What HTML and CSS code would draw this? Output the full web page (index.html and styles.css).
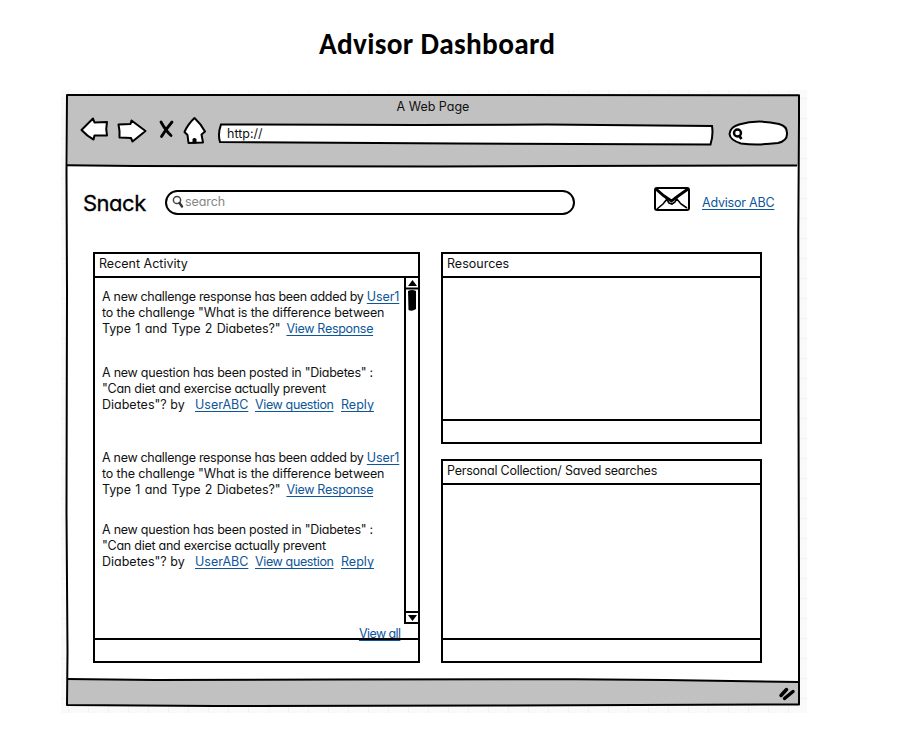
FILE: index.html
```html
<!DOCTYPE html>
<html lang="en">
<head>
<meta charset="utf-8">
<title>Advisor Dashboard</title>
<link rel="stylesheet" href="styles.css">
</head>
<body>
<h1 class="title">Advisor Dashboard</h1>
<div class="sheet">
  <div class="window">
    <svg class="outline" width="736" height="615" viewBox="0 0 736 615" aria-hidden="true">
      <path class="chrome" d="M3 3.500L733 3V74H470L150 74.500 3 73.800Z"/>
      <path class="chrome" d="M3 587.500L120 588 330 587 560 587.300 733 590V613L390 613.500 180 613 3 613.500Z"/>
      <path class="ink" d="M2 3L300 3 734 3.200 734 28 733.300 140 733.500 320 734 500 734 612.500 430 613.500 150 614 2 613 2.500 560 1.500 420 2 200 1.500 80Z"/>
      <path class="ink" d="M2 73.200L70 74 370 74.500 500 74 732 73.500M2 587L90 588 270 587.500 510 587.200 600 588 733 590"/>
    </svg>
    <header class="toolbar">
      <div class="caption">A Web Page</div>
      <div class="controls">
        <svg class="nav" width="130" height="34" viewBox="0 0 130 34" aria-hidden="true">
          <g fill="#fff" stroke="#000" stroke-width="2" stroke-linejoin="round">
            <path d="M2.500 16L14 4.500 15.500 8.500 28 8Q26.500 15 28 21.500L15.500 21.500 14.500 25.500Q8 22 2.500 16Z"/>
            <path d="M39.500 10.500L51.500 10 52.500 6.500 66.500 17 53.500 27.500 52 24 40.500 23.500Q41 17 39.500 10.500Z"/>
            <path d="M115.500 4Q122 10 126 17.500L122.500 20.500 124 28.500 109.500 29 108.500 21 105.500 18Q109 10 115.500 4Z"/>
          </g>
          <path d="M113.500 29.500V25Q115.500 23 117.500 25V29.500Z"/>
          <path d="M82 8Q87 17 92 21.500M93 8Q87 15 82.500 22.500" fill="none" stroke="#000" stroke-width="2.800" stroke-linecap="round"/>
        </svg>
        <div class="address">
          <svg width="498" height="24" viewBox="0 0 498 24" aria-hidden="true"><path d="M4 2.500L200 3 330 2.500 495 4Q496.500 13 493.500 22.500L240 21.500 3 20Q.500 12 4 2.500Z" fill="#fff" stroke="#000" stroke-width="2"/></svg>
          <span class="url">http://</span>
        </div>
        <svg class="find" width="62" height="28" viewBox="0 0 62 28" aria-hidden="true">
          <path d="M11 6.500Q30 1 51 6 59.500 8 59 16 59 23 50 25 30 27.500 13 25.500 2 22 1.500 16 2 9 11 6.500Z" fill="#fff" stroke="#000" stroke-width="2"/>
          <circle cx="9.500" cy="15" r="3.500" fill="none" stroke="#000" stroke-width="2.400"/><path d="M11 17.500L13.500 21" stroke="#000" stroke-width="2.800"/>
        </svg>
      </div>
    </header>
    <div class="appbar">
      <span class="brand">Snack</span>
      <div class="search">
        <svg width="13" height="14" viewBox="0 0 13 14" aria-hidden="true"><circle cx="5" cy="5" r="3.600" fill="#fff" stroke="#444" stroke-width="1.500"/><path d="M7.500 8L10 11.500" stroke="#333" stroke-width="2.400" stroke-linecap="round"/></svg>
        <span class="placeholder">search</span>
      </div>
      <svg class="mail" width="38" height="26" viewBox="0 0 38 26" aria-hidden="true">
        <rect x="2" y="2" width="34" height="22" rx="2" fill="#fff" stroke="#000" stroke-width="2"/>
        <path d="M3 3Q10 10 18.500 15 25 10 35 3" fill="none" stroke="#000" stroke-width="2.800"/>
        <path d="M4 23L10 18 14 13M34 22L28 18 23 12M13 12L16 17 19 18 22 16 24 12" fill="none" stroke="#000" stroke-width="1.600"/>
      </svg>
      <a class="user link">Advisor ABC</a>
    </div>
    <main class="board">
      <section class="panel activity">
        <h2 class="head">Recent Activity</h2>
        <div class="body">
          <div class="feed">
            <p class="item first"><span class="l1">A new challenge response has been added by <a class="link">User1</a></span><span class="l2">to the challenge "What is the difference between</span><span class="l3">Type 1 and Type 2 Diabetes?"<a class="link gap">View Response</a></span></p>
            <p class="item second"><span class="l4">A new question has been posted in "Diabetes" :</span><span class="l5">"Can diet and exercise actually prevent</span><span class="l6"><span class="by">Diabetes"? by</span><span class="ua"><a class="link">UserABC</a></span><span class="vq"><a class="link">View question</a></span><a class="link">Reply</a></span></p>
            <p class="item third"><span class="l1">A new challenge response has been added by <a class="link">User1</a></span><span class="l2">to the challenge "What is the difference between</span><span class="l3">Type 1 and Type 2 Diabetes?"<a class="link gap">View Response</a></span></p>
            <p class="item fourth"><span class="l4">A new question has been posted in "Diabetes" :</span><span class="l5">"Can diet and exercise actually prevent</span><span class="l6"><span class="by">Diabetes"? by</span><span class="ua"><a class="link">UserABC</a></span><span class="vq"><a class="link">View question</a></span><a class="link">Reply</a></span></p>
            <a class="all link">View all</a>
          </div>
          <svg class="scroll" width="15" height="346" viewBox="0 0 15 346" aria-hidden="true">
            <path d="M1 0V345H15M1 10.500H15M1 334H15" fill="none" stroke="#000" stroke-width="2"/>
            <path d="M8.500 2L13 8H4ZM4 337H13L8.500 343Z"/>
            <path d="M4 13Q8 11 12 13V31Q8 34 4.500 32Z"/>
          </svg>
        </div>
        <div class="foot"></div>
      </section>
      <div class="side">
        <section class="panel resources"><h2 class="head">Resources</h2><div class="body"></div><div class="foot"></div></section>
        <section class="panel saved"><h2 class="head">Personal Collection/ Saved searches</h2><div class="body"></div><div class="foot"></div></section>
      </div>
    </main>
    <footer class="status">
      <svg width="18" height="16" viewBox="0 0 18 16" aria-hidden="true"><path d="M3 9.500L8.500 3.500M6.500 12.500L15 5.500" stroke="#000" stroke-width="3.500" stroke-linecap="round"/></svg>
    </footer>
  </div>
</div>
</body>
</html>
```

FILE: styles.css
```css
* { box-sizing: border-box; }
body { margin: 0; width: 915px; height: 739px; overflow: hidden; background: #fff; color: #111; font: 12.5px/16px Inter, "Liberation Sans", sans-serif; font-feature-settings: "cv11", "ss03"; }
h1, h2, p { margin: 0; font-weight: 400; }
.title { height: 90px; padding: 26px 0 0 319px; font: 700 29.33px/36px Carlito, Lato, "Noto Sans", sans-serif; letter-spacing: .3px; color: #000; white-space: nowrap; }
.sheet { margin-left: 61px; width: 746px; height: 623px; padding: 2px 0 0 4px; background-color: #fafafa; background-image: linear-gradient(90deg, #f2f2f2 1px, transparent 1px), linear-gradient(#f2f2f2 1px, transparent 1px); background-size: 20px 20px; background-position: 7px 8px; }
.window { position: relative; width: 736px; height: 615px; display: flex; flex-direction: column; }
.outline { position: absolute; inset: 0; background: linear-gradient(#fff, #fff) 2px 3px / 731px 610px no-repeat; }
.outline + *, .appbar, .board, .status { position: relative; }
.chrome { fill: #c1c1c1; }
.ink { fill: none; stroke: #000; stroke-width: 2; stroke-linejoin: round; }
.toolbar { height: 74px; }
.caption { height: 22px; padding-top: 7px; text-align: center; }
.controls { display: flex; align-items: flex-start; padding-left: 14px; }
.nav { margin-right: 8px; }
.nav, .find, .search svg, .mail { display: block; flex: none; }
.address { margin-top: 8px; width: 498px; height: 24px; display: grid; }
.address > * { grid-area: 1 / 1; }
.url { padding: 4px 0 0 10px; }
.find { margin: 4px 0 0 13px; }
.appbar { height: 86px; display: flex; align-items: flex-start; padding: 20px 0 0 18px; }
.brand { width: 82px; font-size: 22px; line-height: 34px; letter-spacing: -.5px; color: #000; -webkit-text-stroke: .3px #000; white-space: nowrap; }
.search { width: 410px; height: 25px; margin-top: 4px; display: flex; padding: 3px 0 0 5px; border: 2px solid #000; border-radius: 13px; background: #fff; }
.placeholder { color: #868686; line-height: 14px; letter-spacing: -.1px; }
.mail { margin-left: 78px; }
.user { margin: 9px 0 0 11px; letter-spacing: -.2px; }
.link { color: #0d5699; text-decoration: underline; text-underline-offset: 2px; text-decoration-thickness: 1px; text-decoration-skip-ink: none; white-space: nowrap; }
.board { height: 427px; padding-left: 28px; display: flex; align-items: flex-start; gap: 21px; }
.panel { border: 2px solid #000; display: flex; flex-direction: column; background: #fff; }
.activity { width: 327px; height: 411px; }
.head { height: 24px; border-bottom: 2px solid #000; padding: 2px 0 0 4px; font-size: 12.5px; line-height: 16px; white-space: nowrap; }
.saved .head { letter-spacing: -.23px; }
.body { flex: 1; min-height: 0; display: flex; }
.foot { height: 23px; border-top: 2px solid #000; }
.side { width: 321px; display: flex; flex-direction: column; gap: 15px; }
.resources { height: 192px; }
.saved { height: 204px; }
.feed { width: 309px; padding: 11px 0 0 7px; flex: none; }
.item { height: 76px; }
.second { height: 85px; }
.third { height: 72px; }
.fourth { height: 104px; }
.item > span { display: block; height: 16px; white-space: nowrap; }
.item .l1 { letter-spacing: -.3px; }
.item .l1 .link { letter-spacing: -.1px; }
.item .l2 { letter-spacing: -.15px; }
.item .l3 { letter-spacing: -.1px; word-spacing: 1px; }
.item .l4, .item .l5 { letter-spacing: -.25px; }
.item .gap { margin-left: 6px; letter-spacing: -.3px; word-spacing: 0; }
.by, .ua, .vq { display: inline-block; }
.by { width: 93px; }
.ua { width: 60px; }
.vq { width: 86px; letter-spacing: -.37px; }
.all { display: block; width: max-content; margin-left: 257px; height: 16px; letter-spacing: -.6px; }
.scroll { display: block; flex: none; }
.status { height: 28px; display: flex; justify-content: flex-end; padding: 7px 5px 0 0; }
```
